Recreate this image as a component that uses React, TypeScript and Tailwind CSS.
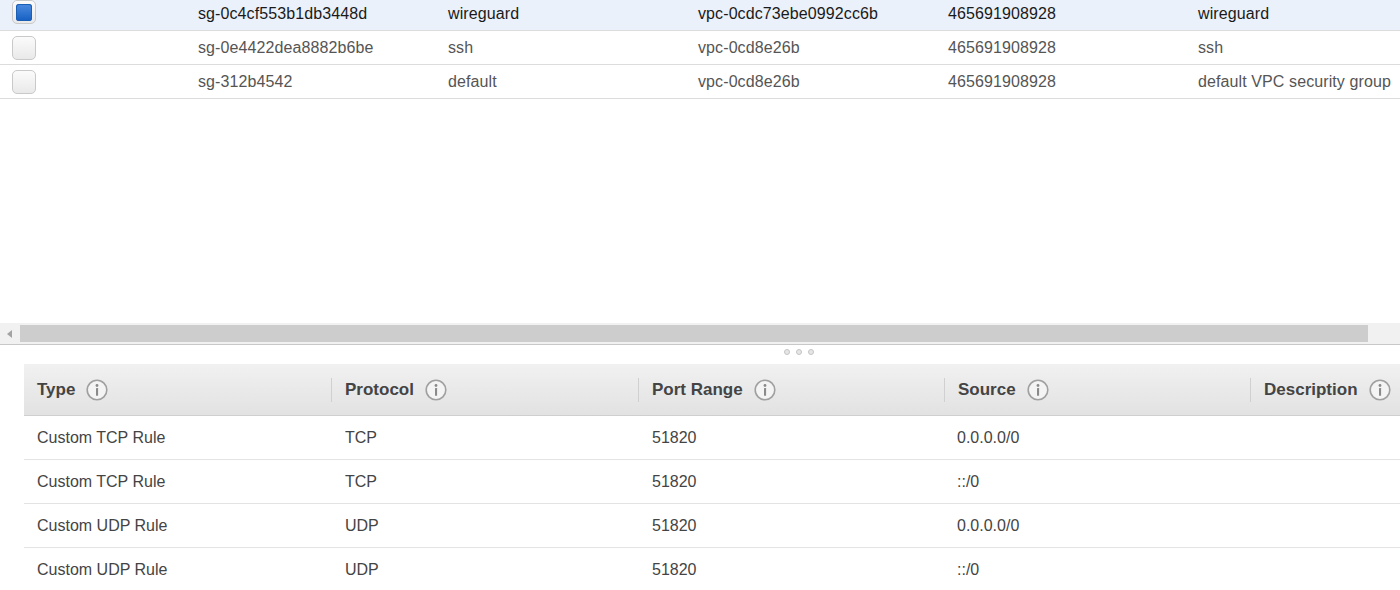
import React from "react";

const topRows = [
  { id: "sg-0c4cf553b1db3448d", name: "wireguard", vpc: "vpc-0cdc73ebe0992cc6b", owner: "465691908928", desc: "wireguard", selected: true },
  { id: "sg-0e4422dea8882b6be", name: "ssh", vpc: "vpc-0cd8e26b", owner: "465691908928", desc: "ssh", selected: false },
  { id: "sg-312b4542", name: "default", vpc: "vpc-0cd8e26b", owner: "465691908928", desc: "default VPC security group", selected: false },
];

const rules = [
  ["Custom TCP Rule", "TCP", "51820", "0.0.0.0/0"],
  ["Custom TCP Rule", "TCP", "51820", "::/0"],
  ["Custom UDP Rule", "UDP", "51820", "0.0.0.0/0"],
  ["Custom UDP Rule", "UDP", "51820", "::/0"],
];

function Checkbox({ checked }: { checked: boolean }) {
  return (
    <div className="w-[24px] h-[24px] rounded-[5px] border border-[#c9c9c9] bg-gradient-to-b from-[#fbfbfb] to-[#e9e9e9] flex items-center justify-center">
      {checked && (
        <div className="w-[16px] h-[17px] rounded-[3px] bg-gradient-to-b from-[#4a8be0] to-[#135fc2] shadow-[inset_0_0_0_1px_#1b5fb5]" />
      )}
    </div>
  );
}

function InfoIcon() {
  return (
    <svg width="22" height="22" viewBox="0 0 22 22" className="shrink-0">
      <circle cx="11" cy="11" r="9.8" fill="#f4f4f4" stroke="#a0a0a0" strokeWidth="1.6" />
      <circle cx="11" cy="6.5" r="1.4" fill="#8a8a8a" />
      <rect x="10" y="9" width="2.1" height="7.8" rx="0.5" fill="#8a8a8a" />
    </svg>
  );
}

const headers = ["Type", "Protocol", "Port Range", "Source", "Description"];

export default function App() {
  return (
    <div className="w-[1400px] h-[590px] overflow-hidden bg-white font-['Liberation_Sans',Arial,sans-serif] text-[16px]">
      {/* Top table area */}
      <div className="h-[323px] flex flex-col">
        {topRows.map((r, i) => (
          <div
            key={r.id}
            className={`${i === 0 ? "h-[31px]" : "h-[34px]"} shrink-0 grid grid-cols-[198px_250px_250px_250px_250px_1fr] items-center border-b border-[#dcdcdc] tracking-[0.1px] ${
              r.selected ? "bg-[#eaf1fb] text-[#1a1a1a]" : "bg-white text-[#555]"
            }`}
          >
            <div className={`pl-[12px] ${i === 0 ? "-mt-[6px]" : ""}`}>
              <Checkbox checked={r.selected} />
            </div>
            <div className={`whitespace-nowrap ${i === 0 ? "-mt-[2px]" : ""}`}>{r.id}</div>
            <div className={`whitespace-nowrap ${i === 0 ? "-mt-[2px]" : ""}`}>{r.name}</div>
            <div className={`whitespace-nowrap ${i === 0 ? "-mt-[2px]" : ""}`}>{r.vpc}</div>
            <div className={`whitespace-nowrap ${i === 0 ? "-mt-[2px]" : ""}`}>{r.owner}</div>
            <div className={`whitespace-nowrap ${i === 0 ? "-mt-[2px]" : ""}`}>{r.desc}</div>
          </div>
        ))}
      </div>

      {/* Horizontal scrollbar */}
      <div className="h-[21px] bg-[#f1f1f1] border-b border-[#c8c8c8] flex items-center box-content">
        <div className="w-[20px] h-full flex items-center justify-center">
          <svg width="6" height="8" viewBox="0 0 6 8">
            <polygon points="5,0 5,8 0,4" fill="#a3a3a3" />
          </svg>
        </div>
        <div className="w-[1348px] h-[17px] bg-[#cdcdcd]" />
      </div>

      {/* Splitter */}
      <div className="h-[19px] flex items-start gap-[6px] pt-[4px] pl-[784px]">
        {[0, 1, 2].map((d) => (
          <div key={d} className="w-[6px] h-[6px] rounded-full bg-[#e6e6e6] border border-[#c4c4c4]" />
        ))}
      </div>

      {/* Rules table */}
      <div className="ml-[24px]">
        <div className="h-[52px] grid grid-cols-[307px_307px_306px_306px_306px] bg-gradient-to-b from-[#f1f1f1] to-[#e2e2e2] border-b border-[#cfcfcf]">
          {headers.map((h, i) => (
            <div key={h} className="flex items-center">
              {i > 0 && <div className="w-[1px] h-[24px] bg-[#d0d0d0] mr-[13px]" />}
              <div className={`flex items-center gap-[11px] ${i === 0 ? "pl-[13px]" : ""}`}>
                <span className="font-bold text-[17px] text-[#444]">{h}</span>
                <InfoIcon />
              </div>
            </div>
          ))}
        </div>
        {rules.map((r, i) => (
          <div key={i} className="h-[44px] grid grid-cols-[307px_307px_306px_306px_306px] items-center border-b border-[#e3e3e3] text-[#444]">
            <div className="pl-[13px] whitespace-nowrap">{r[0]}</div>
            <div className="pl-[14px] whitespace-nowrap">{r[1]}</div>
            <div className="pl-[14px] whitespace-nowrap">{r[2]}</div>
            <div className="pl-[13px] whitespace-nowrap">{r[3]}</div>
            <div />
          </div>
        ))}
      </div>
    </div>
  );
}
